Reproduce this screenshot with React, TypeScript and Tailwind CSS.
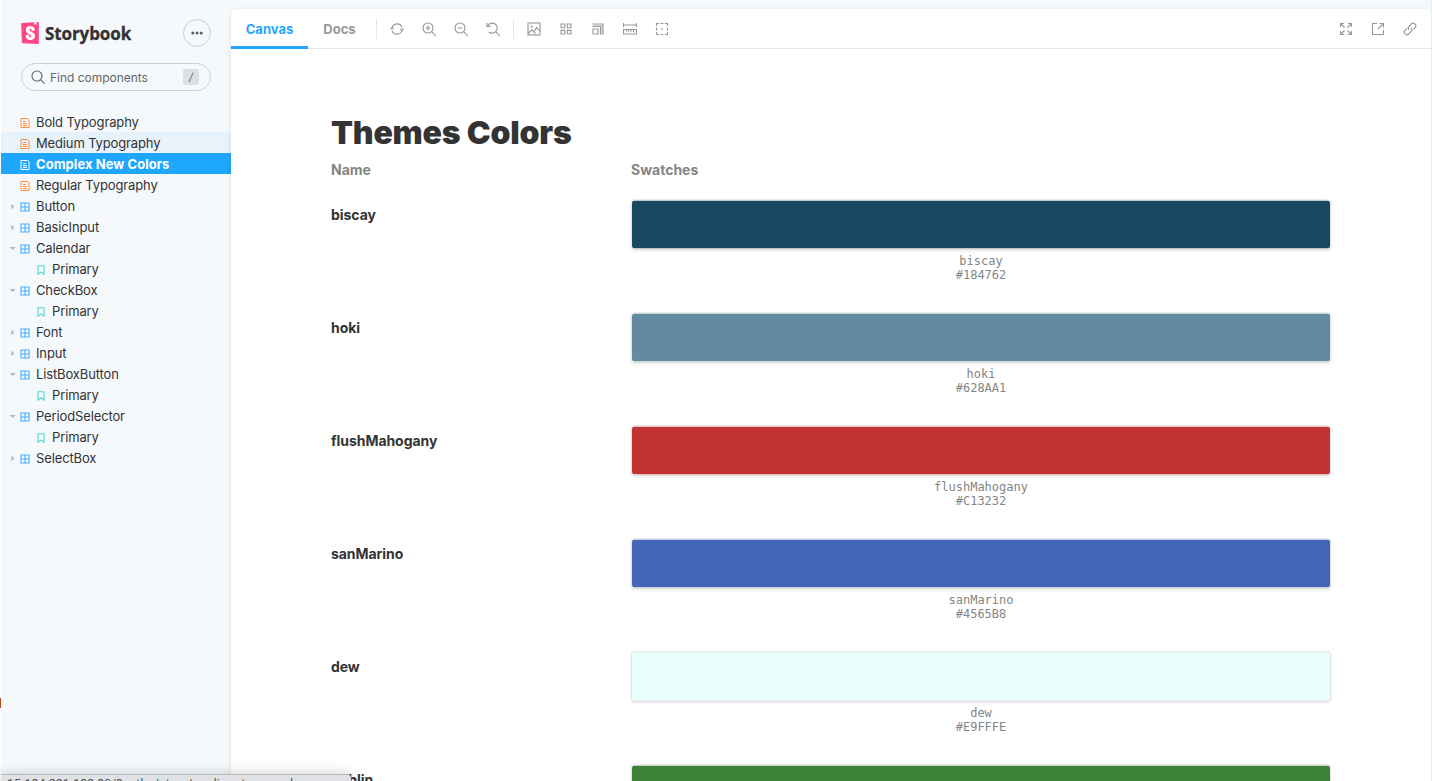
import React from 'react';
import { SiStorybook } from 'react-icons/si';

type IconProps = { children: React.ReactNode; className?: string };

function Icon({ children, className = '' }: IconProps) {
  return (
    <svg viewBox="0 0 14 14" className={`h-3.5 w-3.5 shrink-0 ${className}`} fill="none" stroke="currentColor" strokeWidth="1.15">
      {children}
    </svg>
  );
}

const magnifier = (
  <>
    <circle cx="6" cy="6" r="5" />
    <path d="M9.6 9.6l3.7 3.7" strokeLinecap="round" />
  </>
);

const viewIcons: React.ReactNode[] = [
  <>
    <path d="M2 6A5.2 5.2 0 0 1 12 5.4M12 8A5.2 5.2 0 0 1 2 8.6" />
    <path d="M.4 7.4L1.9 5.7l1.7 1.7M10.4 6.6L12.1 8.3l1.5-1.7" />
  </>,
  <>
    {magnifier}
    <path d="M6 3.5v5M3.5 6h5" />
  </>,
  <>
    {magnifier}
    <path d="M3.5 6h5" />
  </>,
  <>
    <path d="M1.7 4A5 5 0 1 1 3 10" />
    <path d="M9.6 9.6l3.7 3.7M1 1.2v3.3h3.3" strokeLinecap="round" />
  </>,
];

const toolIcons: React.ReactNode[] = [
  <>
    <rect x="1" y="1" width="12" height="12" />
    <circle cx="4.6" cy="4.5" r="1" strokeWidth=".8" />
    <path d="M1.2 11.5l3.5-3.7 2 2 3-4.3 3.2 4M6.7 9.8l1.8 2" />
  </>,
  <path d="M2 2h3.7v3.7H2zM8.3 2H12v3.7H8.3zM2 8.3h3.7V12H2zM8.3 8.3H12V12H8.3z" />,
  <>
    <path d="M2 7h5v5H2z" />
    <path d="M1.5 4.5h8V12.5M1.5 2h10.5v10.5" />
    <path d="M1.5 3.2h9.3v9.3" strokeOpacity=".5" />
  </>,
  <path d="M.5 1v4M13.5 1v4M.5 3h13M.5 7.5h13V12H.5zM3.5 7.5v2M5.8 7.5v2.7M8.2 7.5v2M10.5 7.5v2.7" />,
  <>
    <path d="M1.5 4V1.5H4M10 1.5h2.5V4M12.5 10v2.5H10M4 12.5H1.5V10M5.5 1.5h3M5.5 12.5h3M1.5 5.5v3M12.5 5.5v3" />
    <path d="M6.3 7h1.4" strokeWidth="1.4" />
  </>,
];

const rightIcons: React.ReactNode[] = [
  <path d="M1.5 5V1.5H5M9 1.5h3.5V5M12.5 9v3.5H9M5 12.5H1.5V9M1.5 1.5l4 4M12.5 1.5l-4 4M12.5 12.5l-4-4M1.5 12.5l4-4" />,
  <path d="M6 1.5H1.5v11h11V8M8.5 1.5h4v4M12.5 1.5L6.8 7.2" />,
  <>
    <path d="M6 8.2A2.7 2.7 0 0 1 6 4.4L8.6 1.8A2.65 2.65 0 0 1 12.3 5.5L10.5 7.3" />
    <path d="M8 5.8A2.7 2.7 0 0 1 8 9.6L5.4 12.2A2.65 2.65 0 0 1 1.7 8.5L3.5 6.7" />
  </>,
];

function IconButton({ children }: { children: React.ReactNode }) {
  return (
    <button className="flex h-7 w-7 items-center justify-center">
      <Icon>{children}</Icon>
    </button>
  );
}

type Kind = 'doc' | 'component' | 'story';
type Item = { label: string; kind: Kind; open?: boolean; state?: 'hover' | 'selected' };

const items: Item[] = [
  { label: 'Bold Typography', kind: 'doc' },
  { label: 'Medium Typography', kind: 'doc', state: 'hover' },
  { label: 'Complex New Colors', kind: 'doc', state: 'selected' },
  { label: 'Regular Typography', kind: 'doc' },
  { label: 'Button', kind: 'component' },
  { label: 'BasicInput', kind: 'component' },
  { label: 'Calendar', kind: 'component', open: true },
  { label: 'Primary', kind: 'story' },
  { label: 'CheckBox', kind: 'component', open: true },
  { label: 'Primary', kind: 'story' },
  { label: 'Font', kind: 'component' },
  { label: 'Input', kind: 'component' },
  { label: 'ListBoxButton', kind: 'component', open: true },
  { label: 'Primary', kind: 'story' },
  { label: 'PeriodSelector', kind: 'component', open: true },
  { label: 'Primary', kind: 'story' },
  { label: 'SelectBox', kind: 'component' },
];

function KindIcon({ kind, selected }: { kind: Kind; selected: boolean }) {
  if (kind === 'doc') {
    return (
      <svg viewBox="0 0 10 10" className={`h-2.5 w-2.5 shrink-0 ${selected ? 'text-white' : 'text-[#ff8c37]'}`} fill="none" stroke="currentColor" strokeWidth="1">
        <path d="M1 .5h6.5L9 2v7.5H1zM3 3.5h2.8M3 5.5h4M3 7.5h4" />
      </svg>
    );
  }
  if (kind === 'component') {
    return (
      <svg viewBox="0 0 10 10" className="h-2.5 w-2.5 shrink-0 text-[#48aefb]" fill="none" stroke="currentColor" strokeWidth="1.1">
        <path d="M1 1h8v8H1zM5 1v8M1 5h8" />
      </svg>
    );
  }
  return (
    <svg viewBox="0 0 10 10" className="h-2.5 w-2.5 shrink-0 text-[#4fd8d0]" fill="none" stroke="currentColor" strokeWidth="1.1">
      <path d="M2 .7h6v8.5L5 6.9 2 9.2z" />
    </svg>
  );
}

function TreeRow({ item }: { item: Item }) {
  const selected = item.state === 'selected';
  const tone = selected
    ? 'bg-[#1ea7fd] font-bold text-white tracking-[0.05px]'
    : item.state === 'hover'
      ? 'bg-[#e7f2fb] text-[#333] tracking-[-0.14px]'
      : 'text-[#333] tracking-[-0.13px]';
  return (
    <div className={`flex h-[21px] items-center ${item.kind === 'story' ? 'pl-[35px]' : 'pl-2'} ${tone}`}>
      {item.kind !== 'story' && (
        <svg viewBox="0 0 7 7" className="mt-0.5 mr-1 h-[7px] w-[7px] shrink-0 text-[#b5b9bc]" fill="currentColor">
          {item.kind === 'component' && (item.open ? <path d="M.7 2h6L3.7 5z" /> : <path d="M2.3 .5v6L5.3 3.5z" />)}
        </svg>
      )}
      <span className="mt-[3px] flex">
        <KindIcon kind={item.kind} selected={selected} />
      </span>
      <span className="mt-0.5 ml-1.5 text-[13px] leading-[21px] whitespace-nowrap">{item.label}</span>
    </div>
  );
}

const colors = [
  { name: 'biscay', hex: '#184762', fill: 'bg-[#184762]' },
  { name: 'hoki', hex: '#628AA1', fill: 'bg-[#628aa1]' },
  { name: 'flushMahogany', hex: '#C13232', fill: 'bg-[#c13232]' },
  { name: 'sanMarino', hex: '#4565B8', fill: 'bg-[#4565b8]' },
  { name: 'dew', hex: '#E9FFFE', fill: 'bg-[#e9fffe]' },
  { name: 'goblin', hex: '#3E823A', fill: 'bg-[#3e823a]' },
];

function Sidebar() {
  return (
    <aside className="flex w-[230px] shrink-0 flex-col">
      <div className="flex items-center pt-[19px] pr-5 pl-5">
        <span className="flex h-[22px] w-[18px] items-center justify-center overflow-hidden bg-[linear-gradient(#fff,#fff)] bg-[length:12px_17px] bg-center bg-no-repeat">
          <SiStorybook className="h-[22px] w-[22px] shrink-0 text-[#ff4785]" />
        </span>
        <span className="mt-px ml-1.5 font-['Open_Sans'] text-[17px] leading-6 font-bold tracking-[-0.1px] text-[#333] [-webkit-text-stroke:0.3px_#333]">Storybook</span>
        <button className="ml-auto flex h-7 w-7 items-center justify-center rounded-full border border-[#ccd1d4] text-[#5c5f61]">
          <svg viewBox="0 0 14 14" className="h-3.5 w-3.5" fill="currentColor">
            <circle cx="2.8" cy="7" r="1.5" />
            <circle cx="7" cy="7" r="1.5" />
            <circle cx="11.2" cy="7" r="1.5" />
          </svg>
        </button>
      </div>
      <div className="mt-4 mr-5 ml-5 flex h-7 items-center rounded-full border border-[#ccd1d4] pr-[11px] pl-[9px] text-[#666]">
        <Icon className="h-3 w-3">{magnifier}</Icon>
        <span className="mt-px -ml-px pl-1.5 text-xs leading-4 tracking-[-0.02px]">Find components</span>
        <span className="ml-auto flex h-4 w-4 items-center justify-center rounded-xs bg-[#dde0e2] text-[11px] italic">/</span>
      </div>
      <nav className="mt-5 flex flex-col">
        {items.map((item, i) => (
          <TreeRow key={i} item={item} />
        ))}
      </nav>
    </aside>
  );
}

export default function App() {
  return (
    <div className="relative flex h-[781px] w-[1432px] overflow-hidden bg-[#f6f9fc] font-['Inter',sans-serif] text-[#333]">
      <div className="flex w-px shrink-0 flex-col bg-white pt-[698px]">
        <span className="h-[10px] bg-[#b84a1c]" />
      </div>
      <Sidebar />
      <main className="mt-[9px] flex w-[1200px] shrink-0 flex-col overflow-hidden rounded-t-md bg-white shadow-[0_1px_5px_rgba(0,0,0,0.1)]">
        <div className="flex h-10 shrink-0 items-stretch border-b border-[#e6e6e6] text-[13px] font-bold text-[#999]">
          <button className="flex h-10 w-[77px] shrink-0 items-center justify-center border-t-[3px] border-b-[3px] border-t-transparent border-b-[#1ea7fd] text-[#1ea7fd]">
            <span className="mt-0.5">Canvas</span>
          </button>
          <button className="flex w-[63px] items-center justify-center">
            <span className="mt-0.5">Docs</span>
          </button>
          <div className="flex h-10 items-center text-[#999]">
            <span className="mr-[6.4px] ml-[5px] h-5 w-px bg-[#e6e6e6]" />
            <div className="flex gap-1">
              {viewIcons.map((icon, i) => (
                <IconButton key={i}>{icon}</IconButton>
              ))}
            </div>
            <span className="mr-[6px] ml-[6px] h-5 w-px bg-[#e6e6e6]" />
            <div className="flex gap-1">
              {toolIcons.map((icon, i) => (
                <IconButton key={i}>{icon}</IconButton>
              ))}
            </div>
          </div>
          <div className="mr-[7px] ml-auto flex h-10 items-center gap-1">
            {rightIcons.map((icon, i) => (
              <IconButton key={i}>{icon}</IconButton>
            ))}
          </div>
        </div>
        <section className="flex flex-col pt-[64px] pr-[100px] pl-[100px]">
          <h1 className="text-[32px] leading-10 font-black tracking-[-0.18px]">Themes Colors</h1>
          <div className="mt-[7px] flex text-sm leading-5 font-bold text-[#858585]">
            <span className="w-[300px]">Name</span>
            <span>Swatches</span>
          </div>
          <div className="mt-5 flex flex-col">
            {colors.map((c) => (
              <div key={c.name} className="flex h-[113px] shrink-0">
                <div className="w-[300px] pt-[5px] text-sm leading-5 font-bold tracking-[-0.05px]">{c.name}</div>
                <div className="flex flex-1 flex-col">
                  <div className="flex h-[50px] -translate-y-[0.5px] overflow-hidden rounded-[4px] border border-black/10 bg-white shadow-[0_1px_3px_rgba(0,0,0,0.1)]">
                    <div className={`flex-1 ${c.fill}`} />
                  </div>
                  <div className="pt-1 text-center font-['DejaVu_Sans_Mono',monospace] text-xs leading-[14px] text-[#858585]">
                    <div>{c.name}</div>
                    <div>{c.hex}</div>
                  </div>
                </div>
              </div>
            ))}
          </div>
        </section>
      </main>
      <div className="w-px bg-[#e9ecef]" />
      <div className="absolute top-[774px] left-px h-[20px] w-[350px] overflow-hidden rounded-tr border-t border-[#b9bbbe] bg-[#dfe1e5] pl-1.5 font-['Roboto',sans-serif] text-xs leading-[18px] tracking-[0.25px] whitespace-nowrap text-[#4c4f53] shadow-[0_0_14px_rgba(0,0,0,0.2)]">
        15.184.221.183:80/?path=/story/medium-typography--page
      </div>
    </div>
  );
}
